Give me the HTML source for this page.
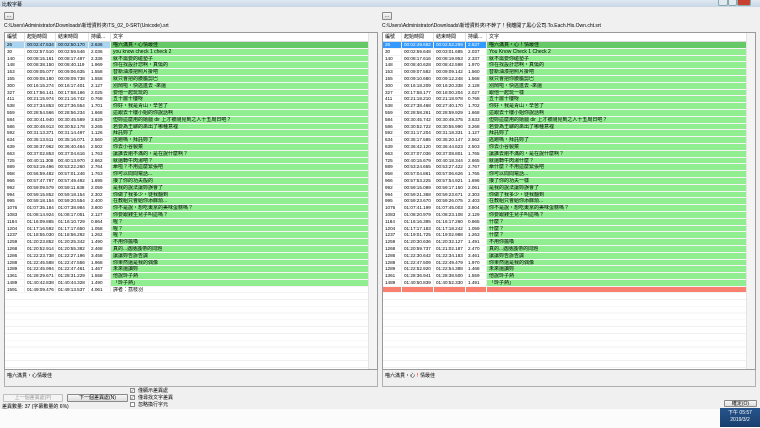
<!DOCTYPE html>
<html><head><meta charset="utf-8"><style>
*{margin:0;padding:0;box-sizing:border-box}
body{width:760px;height:427px;overflow:hidden;background:#f0f0f0;font-family:"Liberation Sans","Noto Sans CJK TC",sans-serif;font-size:5px;color:#000;position:relative}
.top{position:absolute;left:0;top:0;width:760px;height:7px;background:linear-gradient(#dfe8f2,#c8d6e6)}
.title{position:absolute;left:2px;top:1px;font-size:5px}
.wc{position:absolute;top:0;height:6px;border:1px solid #8aa;border-top:none;border-radius:0 0 2px 2px}
.btn{position:absolute;background:linear-gradient(#f6f6f6,#dcdcdc);border:1px solid #8a8a8a;border-radius:1px;text-align:center;font-size:5px;line-height:7px}
.path{position:absolute;top:22px;font-size:5px;white-space:nowrap}
.tbl{position:absolute;top:32px;height:338px;background:#fff;border:1px solid #9a9a9a;overflow:hidden}
.hd{display:flex;height:9px;border-bottom:1px solid #ddd;background:#fff;line-height:9px}
.hd div{border-right:1px solid #e2e2e2;padding-left:2px;white-space:nowrap;overflow:hidden}
.r{display:flex;height:6.8px;line-height:6.8px;border-bottom:1px solid #f4f4f4}
.r div{border-right:1px solid #ececec;padding-left:2px;white-space:nowrap;overflow:hidden;font-size:4.6px}
.r div.t{background:#90ee90;border-right:none;font-size:5px}
.r.s div.t{background:#66c866}
.r.w div.t{background:#fff}
.r.red div{background:#fa8072;border-right:1px solid #fff}
.sb{position:absolute;right:0;top:0;width:9px;height:100%;background:#f4f4f4;border-left:1px solid #e4e4e4}
.empty{height:100px;background:repeating-linear-gradient(#fff 0 6px,#f0f0f0 6px 6.8px)}
.box{position:absolute;top:370px;height:17px;background:#f0f0f0;border:1px solid #b0b0b0;border-top:none;padding:2px 2px;font-size:5px}
.cb{position:absolute;left:130px;font-size:5px;white-space:nowrap}
.cb i{display:inline-block;width:5px;height:5px;border:1px solid #8a8a8a;background:#fff;vertical-align:middle;margin-right:3px;font-style:normal;font-size:4px;line-height:3px;color:#246}
.white{position:absolute;left:0;top:408px;width:760px;height:19px;background:#fbfbfb}
.clock{position:absolute;left:720px;top:408px;width:40px;height:19px;background:linear-gradient(#25548c,#1a3f6e);color:#fff;text-align:center;font-size:5px;line-height:7px;padding-top:2px}
</style></head><body>
<div class="top"><span class="title">比較字幕</span>
<div class="wc" style="left:718px;width:10px;background:#e0e8f0"></div>
<div class="wc" style="left:728px;width:9px;background:#e0e8f0"></div>
<div class="wc" style="left:737px;width:14px;background:#c84030"></div>
</div>
<div class="btn" style="left:4px;top:12px;width:10px;height:8px">...</div>
<div class="btn" style="left:382px;top:12px;width:10px;height:8px">...</div>
<div class="path" style="left:4px">C:\Users\Administrator\Downloads\新增資料夾\TS_02_0-SRT(Unicode).srt</div>
<div class="path" style="left:382px">C:\Users\Administrator\Downloads\新增資料夾\不幹了！我離開了黑心公司.To.Each.His.Own.cht.srt</div>

<div class="tbl" style="left:4px;width:374px">
<div class="hd"><div style="width:20px">編號</div><div style="width:31px">起始時間</div><div style="width:33px">結束時間</div><div style="width:22px">持續...</div><div style="width:259px">文字</div></div>
<div class="r s"><div style="width:20px;background:#a8d4f0">26</div><div style="width:31px;background:#a8d4f0">00:02:47.534</div><div style="width:33px;background:#a8d4f0">00:02:50.170</div><div style="width:22px;background:#a8d4f0">2.636</div><div class="t" style="width:259px">喵六滿貫，心情最佳</div></div>
<div class="r"><div style="width:20px">30</div><div style="width:31px">00:02:57.510</div><div style="width:33px">00:02:59.546</div><div style="width:22px">2.036</div><div class="t" style="width:259px">you know check 1 check 2</div></div>
<div class="r"><div style="width:20px">140</div><div style="width:31px">00:08:15.161</div><div style="width:33px">00:08:17.497</div><div style="width:22px">2.336</div><div class="t" style="width:259px">就不需要的碰墊子</div></div>
<div class="r"><div style="width:20px">148</div><div style="width:31px">00:08:38.150</div><div style="width:33px">00:08:40.119</div><div style="width:22px">1.969</div><div class="t" style="width:259px">你在找設計您啊，真傷的</div></div>
<div class="r"><div style="width:20px">153</div><div style="width:31px">00:09:05.077</div><div style="width:33px">00:09:06.635</div><div style="width:22px">1.558</div><div class="t" style="width:259px">替新油漆把照片掛吧</div></div>
<div class="r"><div style="width:20px">155</div><div style="width:31px">00:09:08.180</div><div style="width:33px">00:09:09.738</div><div style="width:22px">1.558</div><div class="t" style="width:259px">就只會把的腰膽剪巴</div></div>
<div class="r"><div style="width:20px">300</div><div style="width:31px">00:16:15.274</div><div style="width:33px">00:16:17.401</div><div style="width:22px">2.127</div><div class="t" style="width:259px">別鬧啦，快逃進去 -來還</div></div>
<div class="r"><div style="width:20px">327</div><div style="width:31px">00:17:56.141</div><div style="width:33px">00:17:58.166</div><div style="width:22px">2.025</div><div class="t" style="width:259px">要他一起玩玩的</div></div>
<div class="r"><div style="width:20px">411</div><div style="width:31px">00:21:15.974</div><div style="width:33px">00:21:16.742</div><div style="width:22px">0.768</div><div class="t" style="width:259px">五十層十樓呀</div></div>
<div class="r"><div style="width:20px">538</div><div style="width:31px">00:27:34.853</div><div style="width:33px">00:27:36.554</div><div style="width:22px">1.701</div><div class="t" style="width:259px">你好，我是青山，辛苦了</div></div>
<div class="r"><div style="width:20px">559</div><div style="width:31px">00:28:54.566</div><div style="width:33px">00:28:56.234</div><div style="width:22px">1.668</div><div class="t" style="width:259px">這跟去十樓小姐的你說話啊</div></div>
<div class="r"><div style="width:20px">584</div><div style="width:31px">00:30:41.940</div><div style="width:33px">00:30:45.569</div><div style="width:22px">3.629</div><div class="t" style="width:259px">但妳這麼用的嬉戲 dir 上才被剛見到之人十五周日吧？</div></div>
<div class="r"><div style="width:20px">586</div><div style="width:31px">00:30:48.913</div><div style="width:33px">00:30:52.178</div><div style="width:22px">3.265</div><div class="t" style="width:259px">若要為王聊的來出了哪種意裡</div></div>
<div class="r"><div style="width:20px">592</div><div style="width:31px">00:31:13.371</div><div style="width:33px">00:31:14.497</div><div style="width:22px">1.126</div><div class="t" style="width:259px">拜託妳了</div></div>
<div class="r"><div style="width:20px">634</div><div style="width:31px">00:35:13.511</div><div style="width:33px">00:35:16.071</div><div style="width:22px">2.560</div><div class="t" style="width:259px">逃跑嗎，拜託妳了</div></div>
<div class="r"><div style="width:20px">639</div><div style="width:31px">00:36:37.962</div><div style="width:33px">00:36:40.464</div><div style="width:22px">2.502</div><div class="t" style="width:259px">你去小谷製菜</div></div>
<div class="r"><div style="width:20px">663</div><div style="width:31px">00:37:02.853</div><div style="width:33px">00:37:04.616</div><div style="width:22px">1.763</div><div class="t" style="width:259px">讓誰去剛不滿的，是在說什麼啊？</div></div>
<div class="r"><div style="width:20px">725</div><div style="width:31px">00:40:11.308</div><div style="width:33px">00:40:13.970</div><div style="width:22px">2.662</div><div class="t" style="width:259px">就還轉牛肉湯吧？</div></div>
<div class="r"><div style="width:20px">889</div><div style="width:31px">00:53:19.496</div><div style="width:33px">00:53:22.260</div><div style="width:22px">2.764</div><div class="t" style="width:259px">牽啦？不用這麼緊張吧</div></div>
<div class="r"><div style="width:20px">958</div><div style="width:31px">00:56:59.482</div><div style="width:33px">00:57:01.246</div><div style="width:22px">1.763</div><div class="t" style="width:259px">你可以問問電話...</div></div>
<div class="r"><div style="width:20px">966</div><div style="width:31px">00:57:47.797</div><div style="width:33px">00:57:49.492</div><div style="width:22px">1.695</div><div class="t" style="width:259px">接了你的功夫般的</div></div>
<div class="r"><div style="width:20px">992</div><div style="width:31px">00:59:09.579</div><div style="width:33px">00:59:11.638</div><div style="width:22px">2.059</div><div class="t" style="width:259px">是我的說法讓妳誤會了</div></div>
<div class="r"><div style="width:20px">994</div><div style="width:31px">00:59:15.852</div><div style="width:33px">00:59:18.154</div><div style="width:22px">2.302</div><div class="t" style="width:259px">你做了我多少，徒我翻到</div></div>
<div class="r"><div style="width:20px">995</div><div style="width:31px">00:59:18.154</div><div style="width:33px">00:59:20.554</div><div style="width:22px">2.400</div><div class="t" style="width:259px">在教組只會給你添麻煩...</div></div>
<div class="r"><div style="width:20px">1076</div><div style="width:31px">01:07:35.184</div><div style="width:33px">01:07:38.984</div><div style="width:22px">3.800</div><div class="t" style="width:259px">你不是說，想吃東京的美味蛋糕嗎？</div></div>
<div class="r"><div style="width:20px">1083</div><div style="width:31px">01:08:14.924</div><div style="width:33px">01:08:17.051</div><div style="width:22px">2.127</div><div class="t" style="width:259px">你要跟錢生兒子叫這嗎？</div></div>
<div class="r"><div style="width:20px">1184</div><div style="width:31px">01:16:09.865</div><div style="width:33px">01:16:10.729</div><div style="width:22px">0.864</div><div class="t" style="width:259px">喔？</div></div>
<div class="r"><div style="width:20px">1204</div><div style="width:31px">01:17:16.592</div><div style="width:33px">01:17:17.650</div><div style="width:22px">1.058</div><div class="t" style="width:259px">喔？</div></div>
<div class="r"><div style="width:20px">1237</div><div style="width:31px">01:18:55.030</div><div style="width:33px">01:18:56.292</div><div style="width:22px">1.262</div><div class="t" style="width:259px">喔？</div></div>
<div class="r"><div style="width:20px">1259</div><div style="width:31px">01:20:23.852</div><div style="width:33px">01:20:25.342</div><div style="width:22px">1.490</div><div class="t" style="width:259px">不用你擔喚</div></div>
<div class="r"><div style="width:20px">1268</div><div style="width:31px">01:20:52.914</div><div style="width:33px">01:20:55.382</div><div style="width:22px">2.468</div><div class="t" style="width:259px">真的...遇隨護帶的問題</div></div>
<div class="r"><div style="width:20px">1286</div><div style="width:31px">01:22:23.738</div><div style="width:33px">01:22:27.196</div><div style="width:22px">3.458</div><div class="t" style="width:259px">讓讓妳告訴告誠</div></div>
<div class="r"><div style="width:20px">1288</div><div style="width:31px">01:22:45.588</div><div style="width:33px">01:22:47.556</div><div style="width:22px">1.968</div><div class="t" style="width:259px">你果然還是我的偶像</div></div>
<div class="r"><div style="width:20px">1289</div><div style="width:31px">01:22:45.994</div><div style="width:33px">01:22:47.461</div><div style="width:22px">1.467</div><div class="t" style="width:259px">未來還讀妳</div></div>
<div class="r"><div style="width:20px">1361</div><div style="width:31px">01:28:29.671</div><div style="width:33px">01:28:31.229</div><div style="width:22px">1.558</div><div class="t" style="width:259px">他說玲子熱</div></div>
<div class="r"><div style="width:20px">1489</div><div style="width:31px">01:40:42.838</div><div style="width:33px">01:40:44.328</div><div style="width:22px">1.490</div><div class="t" style="width:259px">「玲子熱」</div></div>
<div class="r w"><div style="width:20px">1591</div><div style="width:31px">01:49:09.476</div><div style="width:33px">01:49:13.537</div><div style="width:22px">4.061</div><div class="t" style="width:259px">譯者：荔枝羽</div></div>
<div class="empty"></div>
<div class="sb"></div>
</div>

<div class="tbl" style="left:382px;width:374px">
<div class="hd"><div style="width:19px">編號</div><div style="width:32px">起始時間</div><div style="width:32px">結束時間</div><div style="width:21px">持續...</div><div style="width:262px">文字</div></div>
<div class="r s"><div style="width:19px;background:#3399ff;color:#fff">26</div><div style="width:32px;background:#3399ff;color:#fff">00:02:49.662</div><div style="width:32px;background:#3399ff;color:#fff">00:02:52.299</div><div style="width:21px;background:#3399ff;color:#fff">2.637</div><div class="t" style="width:262px">喵六滿貫，心！情最佳</div></div>
<div class="r"><div style="width:19px">30</div><div style="width:32px">00:02:59.648</div><div style="width:32px">00:03:01.685</div><div style="width:21px">2.037</div><div class="t" style="width:262px">You Know Check 1 Check 2</div></div>
<div class="r"><div style="width:19px">140</div><div style="width:32px">00:08:17.616</div><div style="width:32px">00:08:19.953</div><div style="width:21px">2.337</div><div class="t" style="width:262px">就不需要你碰墊子</div></div>
<div class="r"><div style="width:19px">148</div><div style="width:32px">00:08:40.628</div><div style="width:32px">00:08:42.598</div><div style="width:21px">1.970</div><div class="t" style="width:262px">你在找設計您啊，真傷的</div></div>
<div class="r"><div style="width:19px">153</div><div style="width:32px">00:09:07.582</div><div style="width:32px">00:09:09.142</div><div style="width:21px">1.560</div><div class="t" style="width:262px">替新油漆把照片掛吧</div></div>
<div class="r"><div style="width:19px">155</div><div style="width:32px">00:09:10.680</div><div style="width:32px">00:09:12.248</div><div style="width:21px">1.568</div><div class="t" style="width:262px">就只會把你腰膽剪巴</div></div>
<div class="r"><div style="width:19px">300</div><div style="width:32px">00:16:18.209</div><div style="width:32px">00:16:20.338</div><div style="width:21px">2.128</div><div class="t" style="width:262px">別鬧啦，快逃進去 -來還</div></div>
<div class="r"><div style="width:19px">327</div><div style="width:32px">00:17:58.177</div><div style="width:32px">00:18:00.204</div><div style="width:21px">2.027</div><div class="t" style="width:262px">跟他一起玩一樣</div></div>
<div class="r"><div style="width:19px">411</div><div style="width:32px">00:21:18.210</div><div style="width:32px">00:21:18.978</div><div style="width:21px">0.768</div><div class="t" style="width:262px">五十層十樓呀</div></div>
<div class="r"><div style="width:19px">538</div><div style="width:32px">00:27:38.468</div><div style="width:32px">00:27:40.170</div><div style="width:21px">1.702</div><div class="t" style="width:262px">你好，我是青山，辛苦了</div></div>
<div class="r"><div style="width:19px">559</div><div style="width:32px">00:28:58.261</div><div style="width:32px">00:28:59.929</div><div style="width:21px">1.668</div><div class="t" style="width:262px">這跟去十樓小姐你說話啊</div></div>
<div class="r"><div style="width:19px">584</div><div style="width:32px">00:30:45.742</div><div style="width:32px">00:30:49.375</div><div style="width:21px">3.633</div><div class="t" style="width:262px">但妳這麼用的嬉戲 dir 上才被剛見到之人十五周日吧？</div></div>
<div class="r"><div style="width:19px">586</div><div style="width:32px">00:30:52.722</div><div style="width:32px">00:30:55.990</div><div style="width:21px">3.268</div><div class="t" style="width:262px">若要為王聊的來出了哪種意裡</div></div>
<div class="r"><div style="width:19px">592</div><div style="width:32px">00:31:17.204</div><div style="width:32px">00:31:18.331</div><div style="width:21px">1.127</div><div class="t" style="width:262px">拜託妳了</div></div>
<div class="r"><div style="width:19px">634</div><div style="width:32px">00:35:17.585</div><div style="width:32px">00:35:20.147</div><div style="width:21px">2.562</div><div class="t" style="width:262px">逃跑嗎，拜託妳了</div></div>
<div class="r"><div style="width:19px">639</div><div style="width:32px">00:36:42.120</div><div style="width:32px">00:36:44.623</div><div style="width:21px">2.503</div><div class="t" style="width:262px">你去小谷製菜</div></div>
<div class="r"><div style="width:19px">663</div><div style="width:32px">00:37:07.036</div><div style="width:32px">00:37:08.801</div><div style="width:21px">1.765</div><div class="t" style="width:262px">讓誰去剛不滿的，是在說什麼啊？</div></div>
<div class="r"><div style="width:19px">725</div><div style="width:32px">00:40:15.679</div><div style="width:32px">00:40:18.344</div><div style="width:21px">2.665</div><div class="t" style="width:262px">就還轉牛肉湯什麼？</div></div>
<div class="r"><div style="width:19px">889</div><div style="width:32px">00:53:24.655</div><div style="width:32px">00:53:27.422</div><div style="width:21px">2.767</div><div class="t" style="width:262px">牽什麼？不用這麼緊張吧</div></div>
<div class="r"><div style="width:19px">958</div><div style="width:32px">00:57:04.861</div><div style="width:32px">00:57:06.626</div><div style="width:21px">1.765</div><div class="t" style="width:262px">你可以問問電話...</div></div>
<div class="r"><div style="width:19px">966</div><div style="width:32px">00:57:53.225</div><div style="width:32px">00:57:54.921</div><div style="width:21px">1.696</div><div class="t" style="width:262px">接了你的功夫一樣</div></div>
<div class="r"><div style="width:19px">992</div><div style="width:32px">00:59:15.089</div><div style="width:32px">00:59:17.150</div><div style="width:21px">2.061</div><div class="t" style="width:262px">是我的說法讓妳誤會了</div></div>
<div class="r"><div style="width:19px">994</div><div style="width:32px">00:59:21.368</div><div style="width:32px">00:59:23.671</div><div style="width:21px">2.303</div><div class="t" style="width:262px">你做了我多少，徒我翻到</div></div>
<div class="r"><div style="width:19px">995</div><div style="width:32px">00:59:23.670</div><div style="width:32px">00:59:26.075</div><div style="width:21px">2.403</div><div class="t" style="width:262px">在教組只會給你添麻煩...</div></div>
<div class="r"><div style="width:19px">1076</div><div style="width:32px">01:07:41.199</div><div style="width:32px">01:07:45.003</div><div style="width:21px">3.804</div><div class="t" style="width:262px">你不是說，想吃東京的美味蛋糕嗎？</div></div>
<div class="r"><div style="width:19px">1083</div><div style="width:32px">01:08:20.979</div><div style="width:32px">01:08:23.108</div><div style="width:21px">2.129</div><div class="t" style="width:262px">你要跟錢生兒子叫這嗎？</div></div>
<div class="r"><div style="width:19px">1184</div><div style="width:32px">01:16:16.395</div><div style="width:32px">01:16:17.260</div><div style="width:21px">0.865</div><div class="t" style="width:262px">什麼？</div></div>
<div class="r"><div style="width:19px">1204</div><div style="width:32px">01:17:17.183</div><div style="width:32px">01:17:18.242</div><div style="width:21px">1.059</div><div class="t" style="width:262px">什麼？</div></div>
<div class="r"><div style="width:19px">1237</div><div style="width:32px">01:19:01.725</div><div style="width:32px">01:19:02.988</div><div style="width:21px">1.263</div><div class="t" style="width:262px">什麼？</div></div>
<div class="r"><div style="width:19px">1259</div><div style="width:32px">01:20:30.636</div><div style="width:32px">01:20:32.127</div><div style="width:21px">1.491</div><div class="t" style="width:262px">不用你擔喚</div></div>
<div class="r"><div style="width:19px">1268</div><div style="width:32px">01:20:59.737</div><div style="width:32px">01:21:02.187</div><div style="width:21px">2.470</div><div class="t" style="width:262px">真的...遇隨護帶的問題</div></div>
<div class="r"><div style="width:19px">1286</div><div style="width:32px">01:22:30.642</div><div style="width:32px">01:22:34.183</div><div style="width:21px">3.461</div><div class="t" style="width:262px">讓讓妳告訴告誠</div></div>
<div class="r"><div style="width:19px">1288</div><div style="width:32px">01:22:47.509</div><div style="width:32px">01:22:49.479</div><div style="width:21px">1.970</div><div class="t" style="width:262px">你果然還是我的偶像</div></div>
<div class="r"><div style="width:19px">1289</div><div style="width:32px">01:22:52.920</div><div style="width:32px">01:22:54.388</div><div style="width:21px">1.468</div><div class="t" style="width:262px">未來還讀妳</div></div>
<div class="r"><div style="width:19px">1361</div><div style="width:32px">01:28:36.941</div><div style="width:32px">01:28:38.500</div><div style="width:21px">1.559</div><div class="t" style="width:262px">他說玲子熱</div></div>
<div class="r"><div style="width:19px">1489</div><div style="width:32px">01:40:50.839</div><div style="width:32px">01:40:52.330</div><div style="width:21px">1.491</div><div class="t" style="width:262px">「玲子熱」</div></div>
<div class="r red"><div style="width:19px"></div><div style="width:32px"></div><div style="width:32px"></div><div style="width:21px"></div><div style="width:262px;border-right:none"></div></div>
<div class="empty"></div>
<div class="sb"></div>
</div>

<div class="box" style="left:4px;width:374px">喵六滿貫，心情最佳</div>
<div class="box" style="left:382px;width:374px">喵六滿貫，心<span style="color:#e00">！</span>情最佳</div>

<div class="btn" style="left:3px;top:394px;width:60px;height:8px;color:#999;background:#f4f4f4;border-color:#c0c0c0">上一個差異處(P)</div>
<div class="btn" style="left:67px;top:394px;width:61px;height:8px">下一個差異處(N)</div>
<div class="cb" style="top:387px"><i>✓</i>僅顯示差異處</div>
<div class="cb" style="top:394px"><i>✓</i>僅尋找文字差異</div>
<div class="cb" style="top:401px"><i></i>忽略換行字元</div>
<div style="position:absolute;left:2px;top:403px;font-size:5px">差異數量: 37 (字幕數量的 6%)</div>
<div class="btn" style="left:724px;top:400px;width:33px;height:7px;line-height:6px">確定(O)</div>
<div class="white" style="top:409px"></div>
<div class="clock">下午 05:57<br>2019/3/2</div>
</body></html>
